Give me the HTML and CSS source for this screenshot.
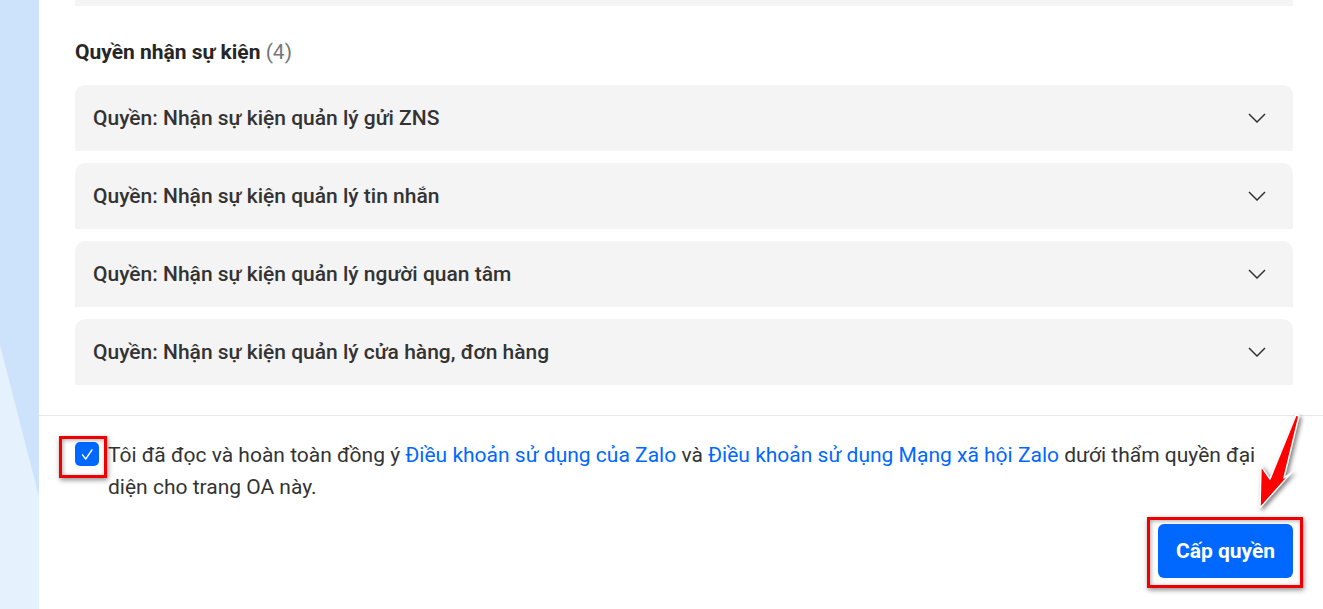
FILE: index.html
```html
<!DOCTYPE html>
<html lang="vi">
<head>
<meta charset="utf-8">
<title>Cấp quyền</title>
<link rel="stylesheet" href="styles.css">
</head>
<body>
<div class="page">
  <aside class="side"></aside>
  <main class="panel">
    <div class="content">
      <div class="prev-card"></div>
      <h3 class="group-title">Quyền nhận sự kiện <span class="count">(4)</span></h3>
      <div class="list">
        <div class="item"><span>Quyền: Nhận sự kiện quản lý gửi ZNS</span>
          <svg class="chev" viewBox="0 0 18 10" width="18" height="10"><path d="M1 1l8 8 8-8" fill="none" stroke="#333" stroke-width="1.5"/></svg></div>
        <div class="item"><span>Quyền: Nhận sự kiện quản lý tin nhắn</span>
          <svg class="chev" viewBox="0 0 18 10" width="18" height="10"><path d="M1 1l8 8 8-8" fill="none" stroke="#333" stroke-width="1.5"/></svg></div>
        <div class="item"><span>Quyền: Nhận sự kiện quản lý người quan tâm</span>
          <svg class="chev" viewBox="0 0 18 10" width="18" height="10"><path d="M1 1l8 8 8-8" fill="none" stroke="#333" stroke-width="1.5"/></svg></div>
        <div class="item"><span>Quyền: Nhận sự kiện quản lý cửa hàng, đơn hàng</span>
          <svg class="chev" viewBox="0 0 18 10" width="18" height="10"><path d="M1 1l8 8 8-8" fill="none" stroke="#333" stroke-width="1.5"/></svg></div>
      </div>
    </div>
    <div class="footer">
      <label class="agree">
        <span class="check"><svg viewBox="0 0 24 24" width="24" height="24"><path d="M7.5 12.8l3.2 4.2 6.3-9.2" fill="none" stroke="#fff" stroke-width="1.4" stroke-linecap="round" stroke-linejoin="round"/></svg></span>
        <span class="agree-text">Tôi đã đọc và hoàn toàn đồng ý <a href="#">Điều khoản sử dụng của Zalo</a> và <a href="#">Điều khoản sử dụng Mạng xã hội Zalo</a> dưới thẩm quyền đại diện cho trang OA này.</span>
      </label>
      <div class="actions">
        <button class="btn-primary">Cấp quyền</button>
      </div>
    </div>
  </main>
  <div class="mark mark-check"></div>
  <div class="mark mark-btn"></div>
  <svg class="arrow" width="60" height="110" viewBox="1250 410 60 110">
    <polygon points="1299,416 1284,478 1292,472 1260,508 1261,466 1270,479 1296,415" fill="#ff0000" stroke="#fff" stroke-width="1.5" stroke-linejoin="round"/>
  </svg>
</div>
</body>
</html>
```
FILE: styles.css
```css
* { box-sizing: border-box; }
html, body { margin: 0; padding: 0; }
body {
  font-family: Roboto, "Noto Sans", Arial, sans-serif;
  color: #333;
  background: #cde3fb;
}
.page {
  position: relative;
  display: flex;
  width: 1323px;
  height: 609px;
  overflow: hidden;
}
.side {
  position: relative;
  width: 39px;
  flex: none;
  background: #cde3fb;
}
.side::after {
  content: "";
  position: absolute;
  inset: 0;
  background: #e6f1fe;
  clip-path: polygon(0 345px, 39px 497px, 39px 100%, 0 100%);
}
.panel {
  flex: 1;
  background: #fff;
  display: flex;
  flex-direction: column;
}
.content {
  padding: 0 30px 30px 36px;
}
.prev-card {
  height: 6px;
  background: #f4f4f4;
}
.group-title {
  margin: 33px 0 20px;
  font-size: 21px;
  line-height: 26px;
  font-weight: 700;
  color: #262626;
}
.count {
  font-weight: 400;
  color: #767676;
}
.list {
  display: flex;
  flex-direction: column;
  gap: 12px;
}
.item {
  height: 66px;
  background: #f4f4f4;
  border-radius: 10px 10px 0 0;
  display: flex;
  align-items: center;
  justify-content: space-between;
  padding: 0 27px 0 18px;
  font-size: 21px;
  font-weight: 500;
  color: #333;
}
.chev { display: block; }
.footer {
  border-top: 1px solid #e8e8e8;
  padding: 23px 30px 32px 36px;
  display: flex;
  flex-direction: column;
  gap: 21px;
}
.agree {
  display: flex;
  align-items: flex-start;
  gap: 9px;
  font-size: 21px;
  line-height: 32px;
  color: #333;
}
.check {
  flex: none;
  margin-top: 3px;
  width: 24px;
  height: 24px;
  border-radius: 5px;
  background: #0068ff;
}
.check svg { display: block; }
.agree-text a {
  color: #0068ff;
  text-decoration: none;
}
.actions {
  display: flex;
  justify-content: flex-end;
}
.btn-primary {
  width: 135px;
  height: 54px;
  border: 0;
  border-radius: 6px;
  background: #0068ff;
  color: #fff;
  font-family: Roboto, Arial, sans-serif;
  font-size: 21px;
  font-weight: 700;
}
.mark {
  position: absolute;
  border: 3px solid #ee0000;
  box-shadow: 1px 2px 5px rgba(0,0,0,0.45), inset 1px 1px 4px rgba(0,0,0,0.35);
}
.mark-check { left: 59px; top: 436px; width: 48px; height: 42px; }
.mark-btn { left: 1147px; top: 517px; width: 156px; height: 71px; }
.arrow {
  position: absolute;
  left: 1250px;
  top: 410px;
  filter: drop-shadow(2px 2px 2px rgba(0,0,0,0.5));
}
```
